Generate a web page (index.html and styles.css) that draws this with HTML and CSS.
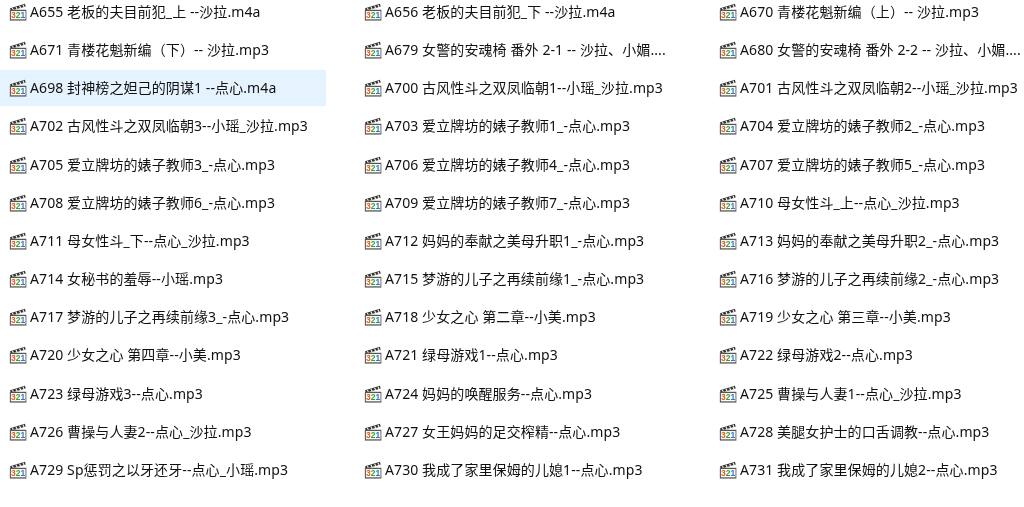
FILE: index.html
```html
<!DOCTYPE html>
<html lang="zh-CN">
<head>
<meta charset="utf-8">
<title>文件列表</title>
<link rel="stylesheet" href="styles.css">
</head>
<body>
<ul class="files">
  <li class="file"><svg class="icon" viewBox="0 0 17 17"><path class="clap" d="M1 5 15 .8l.8 2.6L1.6 7.4z"/><path class="stripes" d="M3.2 4.6l1 2.2M6.6 3.6l1 2.2M10 2.6l1 2.2M13.2 1.6l1 2.2"/><rect class="body" x=".8" y="6.4" width="15.6" height="10.2"/><rect class="card" x="1.8" y="7.6" width="13.8" height="7.8"/><text x="2" y="14.6" class="digits"><tspan class="d3">3</tspan><tspan class="d2">2</tspan><tspan class="d1">1</tspan></text></svg><span class="name">A655 老板的夫目前犯_上 --沙拉.m4a</span></li>
  <li class="file"><svg class="icon" viewBox="0 0 17 17"><path class="clap" d="M1 5 15 .8l.8 2.6L1.6 7.4z"/><path class="stripes" d="M3.2 4.6l1 2.2M6.6 3.6l1 2.2M10 2.6l1 2.2M13.2 1.6l1 2.2"/><rect class="body" x=".8" y="6.4" width="15.6" height="10.2"/><rect class="card" x="1.8" y="7.6" width="13.8" height="7.8"/><text x="2" y="14.6" class="digits"><tspan class="d3">3</tspan><tspan class="d2">2</tspan><tspan class="d1">1</tspan></text></svg><span class="name">A656 老板的夫目前犯_下 --沙拉.m4a</span></li>
  <li class="file"><svg class="icon" viewBox="0 0 17 17"><path class="clap" d="M1 5 15 .8l.8 2.6L1.6 7.4z"/><path class="stripes" d="M3.2 4.6l1 2.2M6.6 3.6l1 2.2M10 2.6l1 2.2M13.2 1.6l1 2.2"/><rect class="body" x=".8" y="6.4" width="15.6" height="10.2"/><rect class="card" x="1.8" y="7.6" width="13.8" height="7.8"/><text x="2" y="14.6" class="digits"><tspan class="d3">3</tspan><tspan class="d2">2</tspan><tspan class="d1">1</tspan></text></svg><span class="name">A670 青楼花魁新编（上）-- 沙拉.mp3</span></li>
  <li class="file"><svg class="icon" viewBox="0 0 17 17"><path class="clap" d="M1 5 15 .8l.8 2.6L1.6 7.4z"/><path class="stripes" d="M3.2 4.6l1 2.2M6.6 3.6l1 2.2M10 2.6l1 2.2M13.2 1.6l1 2.2"/><rect class="body" x=".8" y="6.4" width="15.6" height="10.2"/><rect class="card" x="1.8" y="7.6" width="13.8" height="7.8"/><text x="2" y="14.6" class="digits"><tspan class="d3">3</tspan><tspan class="d2">2</tspan><tspan class="d1">1</tspan></text></svg><span class="name">A671 青楼花魁新编（下）-- 沙拉.mp3</span></li>
  <li class="file"><svg class="icon" viewBox="0 0 17 17"><path class="clap" d="M1 5 15 .8l.8 2.6L1.6 7.4z"/><path class="stripes" d="M3.2 4.6l1 2.2M6.6 3.6l1 2.2M10 2.6l1 2.2M13.2 1.6l1 2.2"/><rect class="body" x=".8" y="6.4" width="15.6" height="10.2"/><rect class="card" x="1.8" y="7.6" width="13.8" height="7.8"/><text x="2" y="14.6" class="digits"><tspan class="d3">3</tspan><tspan class="d2">2</tspan><tspan class="d1">1</tspan></text></svg><span class="name">A679 女警的安魂椅 番外 2-1 -- 沙拉、小媚....</span></li>
  <li class="file"><svg class="icon" viewBox="0 0 17 17"><path class="clap" d="M1 5 15 .8l.8 2.6L1.6 7.4z"/><path class="stripes" d="M3.2 4.6l1 2.2M6.6 3.6l1 2.2M10 2.6l1 2.2M13.2 1.6l1 2.2"/><rect class="body" x=".8" y="6.4" width="15.6" height="10.2"/><rect class="card" x="1.8" y="7.6" width="13.8" height="7.8"/><text x="2" y="14.6" class="digits"><tspan class="d3">3</tspan><tspan class="d2">2</tspan><tspan class="d1">1</tspan></text></svg><span class="name">A680 女警的安魂椅 番外 2-2 -- 沙拉、小媚....</span></li>
  <li class="file selected"><svg class="icon" viewBox="0 0 17 17"><path class="clap" d="M1 5 15 .8l.8 2.6L1.6 7.4z"/><path class="stripes" d="M3.2 4.6l1 2.2M6.6 3.6l1 2.2M10 2.6l1 2.2M13.2 1.6l1 2.2"/><rect class="body" x=".8" y="6.4" width="15.6" height="10.2"/><rect class="card" x="1.8" y="7.6" width="13.8" height="7.8"/><text x="2" y="14.6" class="digits"><tspan class="d3">3</tspan><tspan class="d2">2</tspan><tspan class="d1">1</tspan></text></svg><span class="name">A698 封神榜之妲己的阴谋1 --点心.m4a</span></li>
  <li class="file"><svg class="icon" viewBox="0 0 17 17"><path class="clap" d="M1 5 15 .8l.8 2.6L1.6 7.4z"/><path class="stripes" d="M3.2 4.6l1 2.2M6.6 3.6l1 2.2M10 2.6l1 2.2M13.2 1.6l1 2.2"/><rect class="body" x=".8" y="6.4" width="15.6" height="10.2"/><rect class="card" x="1.8" y="7.6" width="13.8" height="7.8"/><text x="2" y="14.6" class="digits"><tspan class="d3">3</tspan><tspan class="d2">2</tspan><tspan class="d1">1</tspan></text></svg><span class="name">A700 古风性斗之双凤临朝1--小瑶_沙拉.mp3</span></li>
  <li class="file"><svg class="icon" viewBox="0 0 17 17"><path class="clap" d="M1 5 15 .8l.8 2.6L1.6 7.4z"/><path class="stripes" d="M3.2 4.6l1 2.2M6.6 3.6l1 2.2M10 2.6l1 2.2M13.2 1.6l1 2.2"/><rect class="body" x=".8" y="6.4" width="15.6" height="10.2"/><rect class="card" x="1.8" y="7.6" width="13.8" height="7.8"/><text x="2" y="14.6" class="digits"><tspan class="d3">3</tspan><tspan class="d2">2</tspan><tspan class="d1">1</tspan></text></svg><span class="name">A701 古风性斗之双凤临朝2--小瑶_沙拉.mp3</span></li>
  <li class="file"><svg class="icon" viewBox="0 0 17 17"><path class="clap" d="M1 5 15 .8l.8 2.6L1.6 7.4z"/><path class="stripes" d="M3.2 4.6l1 2.2M6.6 3.6l1 2.2M10 2.6l1 2.2M13.2 1.6l1 2.2"/><rect class="body" x=".8" y="6.4" width="15.6" height="10.2"/><rect class="card" x="1.8" y="7.6" width="13.8" height="7.8"/><text x="2" y="14.6" class="digits"><tspan class="d3">3</tspan><tspan class="d2">2</tspan><tspan class="d1">1</tspan></text></svg><span class="name">A702 古风性斗之双凤临朝3--小瑶_沙拉.mp3</span></li>
  <li class="file"><svg class="icon" viewBox="0 0 17 17"><path class="clap" d="M1 5 15 .8l.8 2.6L1.6 7.4z"/><path class="stripes" d="M3.2 4.6l1 2.2M6.6 3.6l1 2.2M10 2.6l1 2.2M13.2 1.6l1 2.2"/><rect class="body" x=".8" y="6.4" width="15.6" height="10.2"/><rect class="card" x="1.8" y="7.6" width="13.8" height="7.8"/><text x="2" y="14.6" class="digits"><tspan class="d3">3</tspan><tspan class="d2">2</tspan><tspan class="d1">1</tspan></text></svg><span class="name">A703 爱立牌坊的婊子教师1_-点心.mp3</span></li>
  <li class="file"><svg class="icon" viewBox="0 0 17 17"><path class="clap" d="M1 5 15 .8l.8 2.6L1.6 7.4z"/><path class="stripes" d="M3.2 4.6l1 2.2M6.6 3.6l1 2.2M10 2.6l1 2.2M13.2 1.6l1 2.2"/><rect class="body" x=".8" y="6.4" width="15.6" height="10.2"/><rect class="card" x="1.8" y="7.6" width="13.8" height="7.8"/><text x="2" y="14.6" class="digits"><tspan class="d3">3</tspan><tspan class="d2">2</tspan><tspan class="d1">1</tspan></text></svg><span class="name">A704 爱立牌坊的婊子教师2_-点心.mp3</span></li>
  <li class="file"><svg class="icon" viewBox="0 0 17 17"><path class="clap" d="M1 5 15 .8l.8 2.6L1.6 7.4z"/><path class="stripes" d="M3.2 4.6l1 2.2M6.6 3.6l1 2.2M10 2.6l1 2.2M13.2 1.6l1 2.2"/><rect class="body" x=".8" y="6.4" width="15.6" height="10.2"/><rect class="card" x="1.8" y="7.6" width="13.8" height="7.8"/><text x="2" y="14.6" class="digits"><tspan class="d3">3</tspan><tspan class="d2">2</tspan><tspan class="d1">1</tspan></text></svg><span class="name">A705 爱立牌坊的婊子教师3_-点心.mp3</span></li>
  <li class="file"><svg class="icon" viewBox="0 0 17 17"><path class="clap" d="M1 5 15 .8l.8 2.6L1.6 7.4z"/><path class="stripes" d="M3.2 4.6l1 2.2M6.6 3.6l1 2.2M10 2.6l1 2.2M13.2 1.6l1 2.2"/><rect class="body" x=".8" y="6.4" width="15.6" height="10.2"/><rect class="card" x="1.8" y="7.6" width="13.8" height="7.8"/><text x="2" y="14.6" class="digits"><tspan class="d3">3</tspan><tspan class="d2">2</tspan><tspan class="d1">1</tspan></text></svg><span class="name">A706 爱立牌坊的婊子教师4_-点心.mp3</span></li>
  <li class="file"><svg class="icon" viewBox="0 0 17 17"><path class="clap" d="M1 5 15 .8l.8 2.6L1.6 7.4z"/><path class="stripes" d="M3.2 4.6l1 2.2M6.6 3.6l1 2.2M10 2.6l1 2.2M13.2 1.6l1 2.2"/><rect class="body" x=".8" y="6.4" width="15.6" height="10.2"/><rect class="card" x="1.8" y="7.6" width="13.8" height="7.8"/><text x="2" y="14.6" class="digits"><tspan class="d3">3</tspan><tspan class="d2">2</tspan><tspan class="d1">1</tspan></text></svg><span class="name">A707 爱立牌坊的婊子教师5_-点心.mp3</span></li>
  <li class="file"><svg class="icon" viewBox="0 0 17 17"><path class="clap" d="M1 5 15 .8l.8 2.6L1.6 7.4z"/><path class="stripes" d="M3.2 4.6l1 2.2M6.6 3.6l1 2.2M10 2.6l1 2.2M13.2 1.6l1 2.2"/><rect class="body" x=".8" y="6.4" width="15.6" height="10.2"/><rect class="card" x="1.8" y="7.6" width="13.8" height="7.8"/><text x="2" y="14.6" class="digits"><tspan class="d3">3</tspan><tspan class="d2">2</tspan><tspan class="d1">1</tspan></text></svg><span class="name">A708 爱立牌坊的婊子教师6_-点心.mp3</span></li>
  <li class="file"><svg class="icon" viewBox="0 0 17 17"><path class="clap" d="M1 5 15 .8l.8 2.6L1.6 7.4z"/><path class="stripes" d="M3.2 4.6l1 2.2M6.6 3.6l1 2.2M10 2.6l1 2.2M13.2 1.6l1 2.2"/><rect class="body" x=".8" y="6.4" width="15.6" height="10.2"/><rect class="card" x="1.8" y="7.6" width="13.8" height="7.8"/><text x="2" y="14.6" class="digits"><tspan class="d3">3</tspan><tspan class="d2">2</tspan><tspan class="d1">1</tspan></text></svg><span class="name">A709 爱立牌坊的婊子教师7_-点心.mp3</span></li>
  <li class="file"><svg class="icon" viewBox="0 0 17 17"><path class="clap" d="M1 5 15 .8l.8 2.6L1.6 7.4z"/><path class="stripes" d="M3.2 4.6l1 2.2M6.6 3.6l1 2.2M10 2.6l1 2.2M13.2 1.6l1 2.2"/><rect class="body" x=".8" y="6.4" width="15.6" height="10.2"/><rect class="card" x="1.8" y="7.6" width="13.8" height="7.8"/><text x="2" y="14.6" class="digits"><tspan class="d3">3</tspan><tspan class="d2">2</tspan><tspan class="d1">1</tspan></text></svg><span class="name">A710 母女性斗_上--点心_沙拉.mp3</span></li>
  <li class="file"><svg class="icon" viewBox="0 0 17 17"><path class="clap" d="M1 5 15 .8l.8 2.6L1.6 7.4z"/><path class="stripes" d="M3.2 4.6l1 2.2M6.6 3.6l1 2.2M10 2.6l1 2.2M13.2 1.6l1 2.2"/><rect class="body" x=".8" y="6.4" width="15.6" height="10.2"/><rect class="card" x="1.8" y="7.6" width="13.8" height="7.8"/><text x="2" y="14.6" class="digits"><tspan class="d3">3</tspan><tspan class="d2">2</tspan><tspan class="d1">1</tspan></text></svg><span class="name">A711 母女性斗_下--点心_沙拉.mp3</span></li>
  <li class="file"><svg class="icon" viewBox="0 0 17 17"><path class="clap" d="M1 5 15 .8l.8 2.6L1.6 7.4z"/><path class="stripes" d="M3.2 4.6l1 2.2M6.6 3.6l1 2.2M10 2.6l1 2.2M13.2 1.6l1 2.2"/><rect class="body" x=".8" y="6.4" width="15.6" height="10.2"/><rect class="card" x="1.8" y="7.6" width="13.8" height="7.8"/><text x="2" y="14.6" class="digits"><tspan class="d3">3</tspan><tspan class="d2">2</tspan><tspan class="d1">1</tspan></text></svg><span class="name">A712 妈妈的奉献之美母升职1_-点心.mp3</span></li>
  <li class="file"><svg class="icon" viewBox="0 0 17 17"><path class="clap" d="M1 5 15 .8l.8 2.6L1.6 7.4z"/><path class="stripes" d="M3.2 4.6l1 2.2M6.6 3.6l1 2.2M10 2.6l1 2.2M13.2 1.6l1 2.2"/><rect class="body" x=".8" y="6.4" width="15.6" height="10.2"/><rect class="card" x="1.8" y="7.6" width="13.8" height="7.8"/><text x="2" y="14.6" class="digits"><tspan class="d3">3</tspan><tspan class="d2">2</tspan><tspan class="d1">1</tspan></text></svg><span class="name">A713 妈妈的奉献之美母升职2_-点心.mp3</span></li>
  <li class="file"><svg class="icon" viewBox="0 0 17 17"><path class="clap" d="M1 5 15 .8l.8 2.6L1.6 7.4z"/><path class="stripes" d="M3.2 4.6l1 2.2M6.6 3.6l1 2.2M10 2.6l1 2.2M13.2 1.6l1 2.2"/><rect class="body" x=".8" y="6.4" width="15.6" height="10.2"/><rect class="card" x="1.8" y="7.6" width="13.8" height="7.8"/><text x="2" y="14.6" class="digits"><tspan class="d3">3</tspan><tspan class="d2">2</tspan><tspan class="d1">1</tspan></text></svg><span class="name">A714 女秘书的羞辱--小瑶.mp3</span></li>
  <li class="file"><svg class="icon" viewBox="0 0 17 17"><path class="clap" d="M1 5 15 .8l.8 2.6L1.6 7.4z"/><path class="stripes" d="M3.2 4.6l1 2.2M6.6 3.6l1 2.2M10 2.6l1 2.2M13.2 1.6l1 2.2"/><rect class="body" x=".8" y="6.4" width="15.6" height="10.2"/><rect class="card" x="1.8" y="7.6" width="13.8" height="7.8"/><text x="2" y="14.6" class="digits"><tspan class="d3">3</tspan><tspan class="d2">2</tspan><tspan class="d1">1</tspan></text></svg><span class="name">A715 梦游的儿子之再续前缘1_-点心.mp3</span></li>
  <li class="file"><svg class="icon" viewBox="0 0 17 17"><path class="clap" d="M1 5 15 .8l.8 2.6L1.6 7.4z"/><path class="stripes" d="M3.2 4.6l1 2.2M6.6 3.6l1 2.2M10 2.6l1 2.2M13.2 1.6l1 2.2"/><rect class="body" x=".8" y="6.4" width="15.6" height="10.2"/><rect class="card" x="1.8" y="7.6" width="13.8" height="7.8"/><text x="2" y="14.6" class="digits"><tspan class="d3">3</tspan><tspan class="d2">2</tspan><tspan class="d1">1</tspan></text></svg><span class="name">A716 梦游的儿子之再续前缘2_-点心.mp3</span></li>
  <li class="file"><svg class="icon" viewBox="0 0 17 17"><path class="clap" d="M1 5 15 .8l.8 2.6L1.6 7.4z"/><path class="stripes" d="M3.2 4.6l1 2.2M6.6 3.6l1 2.2M10 2.6l1 2.2M13.2 1.6l1 2.2"/><rect class="body" x=".8" y="6.4" width="15.6" height="10.2"/><rect class="card" x="1.8" y="7.6" width="13.8" height="7.8"/><text x="2" y="14.6" class="digits"><tspan class="d3">3</tspan><tspan class="d2">2</tspan><tspan class="d1">1</tspan></text></svg><span class="name">A717 梦游的儿子之再续前缘3_-点心.mp3</span></li>
  <li class="file"><svg class="icon" viewBox="0 0 17 17"><path class="clap" d="M1 5 15 .8l.8 2.6L1.6 7.4z"/><path class="stripes" d="M3.2 4.6l1 2.2M6.6 3.6l1 2.2M10 2.6l1 2.2M13.2 1.6l1 2.2"/><rect class="body" x=".8" y="6.4" width="15.6" height="10.2"/><rect class="card" x="1.8" y="7.6" width="13.8" height="7.8"/><text x="2" y="14.6" class="digits"><tspan class="d3">3</tspan><tspan class="d2">2</tspan><tspan class="d1">1</tspan></text></svg><span class="name">A718 少女之心 第二章--小美.mp3</span></li>
  <li class="file"><svg class="icon" viewBox="0 0 17 17"><path class="clap" d="M1 5 15 .8l.8 2.6L1.6 7.4z"/><path class="stripes" d="M3.2 4.6l1 2.2M6.6 3.6l1 2.2M10 2.6l1 2.2M13.2 1.6l1 2.2"/><rect class="body" x=".8" y="6.4" width="15.6" height="10.2"/><rect class="card" x="1.8" y="7.6" width="13.8" height="7.8"/><text x="2" y="14.6" class="digits"><tspan class="d3">3</tspan><tspan class="d2">2</tspan><tspan class="d1">1</tspan></text></svg><span class="name">A719 少女之心 第三章--小美.mp3</span></li>
  <li class="file"><svg class="icon" viewBox="0 0 17 17"><path class="clap" d="M1 5 15 .8l.8 2.6L1.6 7.4z"/><path class="stripes" d="M3.2 4.6l1 2.2M6.6 3.6l1 2.2M10 2.6l1 2.2M13.2 1.6l1 2.2"/><rect class="body" x=".8" y="6.4" width="15.6" height="10.2"/><rect class="card" x="1.8" y="7.6" width="13.8" height="7.8"/><text x="2" y="14.6" class="digits"><tspan class="d3">3</tspan><tspan class="d2">2</tspan><tspan class="d1">1</tspan></text></svg><span class="name">A720 少女之心 第四章--小美.mp3</span></li>
  <li class="file"><svg class="icon" viewBox="0 0 17 17"><path class="clap" d="M1 5 15 .8l.8 2.6L1.6 7.4z"/><path class="stripes" d="M3.2 4.6l1 2.2M6.6 3.6l1 2.2M10 2.6l1 2.2M13.2 1.6l1 2.2"/><rect class="body" x=".8" y="6.4" width="15.6" height="10.2"/><rect class="card" x="1.8" y="7.6" width="13.8" height="7.8"/><text x="2" y="14.6" class="digits"><tspan class="d3">3</tspan><tspan class="d2">2</tspan><tspan class="d1">1</tspan></text></svg><span class="name">A721 绿母游戏1--点心.mp3</span></li>
  <li class="file"><svg class="icon" viewBox="0 0 17 17"><path class="clap" d="M1 5 15 .8l.8 2.6L1.6 7.4z"/><path class="stripes" d="M3.2 4.6l1 2.2M6.6 3.6l1 2.2M10 2.6l1 2.2M13.2 1.6l1 2.2"/><rect class="body" x=".8" y="6.4" width="15.6" height="10.2"/><rect class="card" x="1.8" y="7.6" width="13.8" height="7.8"/><text x="2" y="14.6" class="digits"><tspan class="d3">3</tspan><tspan class="d2">2</tspan><tspan class="d1">1</tspan></text></svg><span class="name">A722 绿母游戏2--点心.mp3</span></li>
  <li class="file"><svg class="icon" viewBox="0 0 17 17"><path class="clap" d="M1 5 15 .8l.8 2.6L1.6 7.4z"/><path class="stripes" d="M3.2 4.6l1 2.2M6.6 3.6l1 2.2M10 2.6l1 2.2M13.2 1.6l1 2.2"/><rect class="body" x=".8" y="6.4" width="15.6" height="10.2"/><rect class="card" x="1.8" y="7.6" width="13.8" height="7.8"/><text x="2" y="14.6" class="digits"><tspan class="d3">3</tspan><tspan class="d2">2</tspan><tspan class="d1">1</tspan></text></svg><span class="name">A723 绿母游戏3--点心.mp3</span></li>
  <li class="file"><svg class="icon" viewBox="0 0 17 17"><path class="clap" d="M1 5 15 .8l.8 2.6L1.6 7.4z"/><path class="stripes" d="M3.2 4.6l1 2.2M6.6 3.6l1 2.2M10 2.6l1 2.2M13.2 1.6l1 2.2"/><rect class="body" x=".8" y="6.4" width="15.6" height="10.2"/><rect class="card" x="1.8" y="7.6" width="13.8" height="7.8"/><text x="2" y="14.6" class="digits"><tspan class="d3">3</tspan><tspan class="d2">2</tspan><tspan class="d1">1</tspan></text></svg><span class="name">A724 妈妈的唤醒服务--点心.mp3</span></li>
  <li class="file"><svg class="icon" viewBox="0 0 17 17"><path class="clap" d="M1 5 15 .8l.8 2.6L1.6 7.4z"/><path class="stripes" d="M3.2 4.6l1 2.2M6.6 3.6l1 2.2M10 2.6l1 2.2M13.2 1.6l1 2.2"/><rect class="body" x=".8" y="6.4" width="15.6" height="10.2"/><rect class="card" x="1.8" y="7.6" width="13.8" height="7.8"/><text x="2" y="14.6" class="digits"><tspan class="d3">3</tspan><tspan class="d2">2</tspan><tspan class="d1">1</tspan></text></svg><span class="name">A725 曹操与人妻1--点心_沙拉.mp3</span></li>
  <li class="file"><svg class="icon" viewBox="0 0 17 17"><path class="clap" d="M1 5 15 .8l.8 2.6L1.6 7.4z"/><path class="stripes" d="M3.2 4.6l1 2.2M6.6 3.6l1 2.2M10 2.6l1 2.2M13.2 1.6l1 2.2"/><rect class="body" x=".8" y="6.4" width="15.6" height="10.2"/><rect class="card" x="1.8" y="7.6" width="13.8" height="7.8"/><text x="2" y="14.6" class="digits"><tspan class="d3">3</tspan><tspan class="d2">2</tspan><tspan class="d1">1</tspan></text></svg><span class="name">A726 曹操与人妻2--点心_沙拉.mp3</span></li>
  <li class="file"><svg class="icon" viewBox="0 0 17 17"><path class="clap" d="M1 5 15 .8l.8 2.6L1.6 7.4z"/><path class="stripes" d="M3.2 4.6l1 2.2M6.6 3.6l1 2.2M10 2.6l1 2.2M13.2 1.6l1 2.2"/><rect class="body" x=".8" y="6.4" width="15.6" height="10.2"/><rect class="card" x="1.8" y="7.6" width="13.8" height="7.8"/><text x="2" y="14.6" class="digits"><tspan class="d3">3</tspan><tspan class="d2">2</tspan><tspan class="d1">1</tspan></text></svg><span class="name">A727 女王妈妈的足交榨精--点心.mp3</span></li>
  <li class="file"><svg class="icon" viewBox="0 0 17 17"><path class="clap" d="M1 5 15 .8l.8 2.6L1.6 7.4z"/><path class="stripes" d="M3.2 4.6l1 2.2M6.6 3.6l1 2.2M10 2.6l1 2.2M13.2 1.6l1 2.2"/><rect class="body" x=".8" y="6.4" width="15.6" height="10.2"/><rect class="card" x="1.8" y="7.6" width="13.8" height="7.8"/><text x="2" y="14.6" class="digits"><tspan class="d3">3</tspan><tspan class="d2">2</tspan><tspan class="d1">1</tspan></text></svg><span class="name">A728 美腿女护士的口舌调教--点心.mp3</span></li>
  <li class="file"><svg class="icon" viewBox="0 0 17 17"><path class="clap" d="M1 5 15 .8l.8 2.6L1.6 7.4z"/><path class="stripes" d="M3.2 4.6l1 2.2M6.6 3.6l1 2.2M10 2.6l1 2.2M13.2 1.6l1 2.2"/><rect class="body" x=".8" y="6.4" width="15.6" height="10.2"/><rect class="card" x="1.8" y="7.6" width="13.8" height="7.8"/><text x="2" y="14.6" class="digits"><tspan class="d3">3</tspan><tspan class="d2">2</tspan><tspan class="d1">1</tspan></text></svg><span class="name">A729 Sp惩罚之以牙还牙--点心_小瑶.mp3</span></li>
  <li class="file"><svg class="icon" viewBox="0 0 17 17"><path class="clap" d="M1 5 15 .8l.8 2.6L1.6 7.4z"/><path class="stripes" d="M3.2 4.6l1 2.2M6.6 3.6l1 2.2M10 2.6l1 2.2M13.2 1.6l1 2.2"/><rect class="body" x=".8" y="6.4" width="15.6" height="10.2"/><rect class="card" x="1.8" y="7.6" width="13.8" height="7.8"/><text x="2" y="14.6" class="digits"><tspan class="d3">3</tspan><tspan class="d2">2</tspan><tspan class="d1">1</tspan></text></svg><span class="name">A730 我成了家里保姆的儿媳1--点心.mp3</span></li>
  <li class="file"><svg class="icon" viewBox="0 0 17 17"><path class="clap" d="M1 5 15 .8l.8 2.6L1.6 7.4z"/><path class="stripes" d="M3.2 4.6l1 2.2M6.6 3.6l1 2.2M10 2.6l1 2.2M13.2 1.6l1 2.2"/><rect class="body" x=".8" y="6.4" width="15.6" height="10.2"/><rect class="card" x="1.8" y="7.6" width="13.8" height="7.8"/><text x="2" y="14.6" class="digits"><tspan class="d3">3</tspan><tspan class="d2">2</tspan><tspan class="d1">1</tspan></text></svg><span class="name">A731 我成了家里保姆的儿媳2--点心.mp3</span></li>
</ul>
</body>
</html>
```

FILE: styles.css
```css
html, body {
  margin: 0;
  height: 100%;
  overflow: hidden;
  background: #fff;
}
.files {
  list-style: none;
  margin: -6px 0 0;
  padding: 0;
  display: grid;
  grid-template-columns: repeat(3, 326px);
  grid-auto-rows: 36px;
  column-gap: 29px;
  row-gap: 2.17px;
  font-family: "Noto Sans", "Noto Sans CJK SC", sans-serif;
  font-size: 14px;
  letter-spacing: 0.1px;
  color: #111;
  filter: blur(0.3px);
}
.file {
  display: flex;
  align-items: center;
  padding-left: 9px;
  gap: 3px;
  white-space: nowrap;
}
.selected {
  background: #e5f3ff;
}
.icon {
  width: 18px;
  height: 18px;
  flex: none;
}
.clap {
  fill: #333;
}
.stripes {
  stroke: #f2f0e4;
  stroke-width: 1.1;
}
.body {
  fill: #555;
}
.card {
  fill: #fdfcf6;
}
.digits {
  font-family: "Liberation Sans", sans-serif;
  font-size: 8px;
  font-weight: 700;
  letter-spacing: 0;
}
.d3 {
  fill: #dd5a26;
}
.d2 {
  fill: #3f9c3a;
}
.d1 {
  fill: #2f78cc;
}
.name {
  display: block;
  margin-bottom: 2px;
}
```
